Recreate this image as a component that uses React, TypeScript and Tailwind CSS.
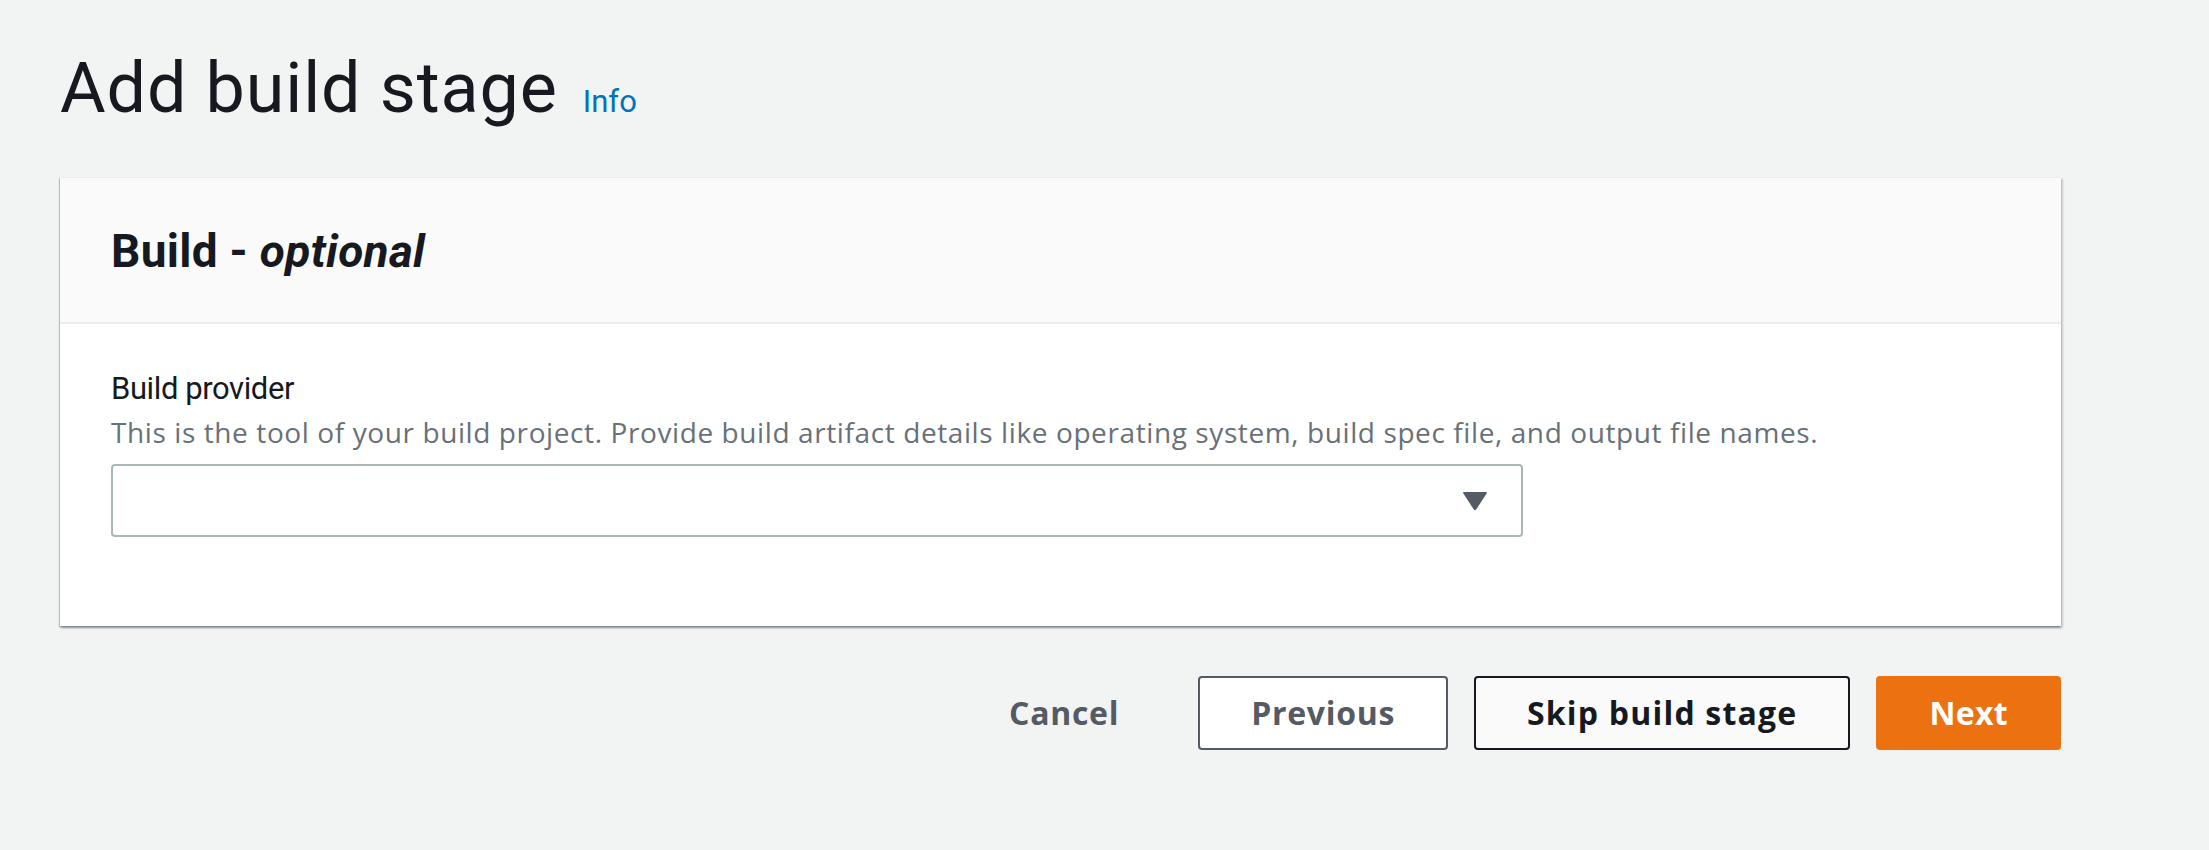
import React from "react";

export default function App() {
  const roboto = { fontFamily: "Roboto, 'Liberation Sans', sans-serif" };
  const open = { fontFamily: "'Open Sans', 'Noto Sans', sans-serif" };
  return (
    <div className="min-h-[850px] w-full bg-[#f2f3f3] pl-[60px] pr-[148px] pt-[48px]" style={roboto}>
      <div className="flex items-baseline gap-[25px]">
        <h1 className="text-[70px] leading-[80px] font-normal tracking-[0.9px] text-[#16191f]">Add build stage</h1>
        <a className="text-[31px] leading-[40px] text-[#0073bb]">Info</a>
      </div>

      <div className="mt-[49px] bg-white border-t border-[#eaeded] shadow-[0_2px_2px_0_rgba(0,28,36,0.3),2px_2px_2px_0_rgba(0,28,36,0.15),-1px_1px_1px_0_rgba(0,28,36,0.15)]">
        <div className="bg-[#fafafa] border-b-2 border-[#eaeded] pl-[51px] pt-[43px] pb-[41px]">
          <h2 className="text-[46px] leading-[60px] font-bold tracking-[0.3px] text-[#16191f]">
            Build - <i className="font-bold">optional</i>
          </h2>
        </div>
        <div className="pl-[51px] pt-[45px] pb-[89px]">
          <div className="text-[31px] leading-[40px] tracking-[-0.4px] text-[#16191f]">Build provider</div>
          <div className="mt-[6px] text-[28px] leading-[34px] tracking-[0.6px] text-[#687078]" style={open}>
            This is the tool of your build project. Provide build artifact details like operating system, build spec file, and output file names.
          </div>
          <div className="mt-[15px] w-[1412px] h-[73px] border-2 border-[#aab7b8] rounded-[4px] bg-white flex items-center justify-end pr-[33px]">
            <svg width="26" height="20" viewBox="0 0 26 20">
              <path d="M2 1 L24 1 Q25.5 1 24.6 2.4 L14.2 18.4 Q13 20 11.8 18.4 L1.4 2.4 Q0.5 1 2 1 Z" fill="#545b64" />
            </svg>
          </div>
        </div>
      </div>

      <div className="mt-[50px] flex justify-end gap-[26px]" style={open}>
        <button className="h-[74px] px-[51px] border-2 border-transparent text-[32px] font-bold tracking-[0.7px] text-[#545b64] rounded-[4px]">Cancel</button>
        <button className="h-[74px] px-[51px] border-2 border-[#545b64] bg-white text-[32px] font-bold tracking-[0.7px] text-[#545b64] rounded-[4px]">Previous</button>
        <button className="h-[74px] px-[51px] border-2 border-[#16191f] bg-[#fafafa] text-[32px] font-bold tracking-[1.2px] text-[#16191f] rounded-[4px]">Skip build stage</button>
        <button className="h-[74px] px-[51px] border-2 border-[#ec7211] bg-[#ec7211] text-[32px] font-bold tracking-[0.3px] text-white rounded-[4px]">Next</button>
      </div>
    </div>
  );
}
